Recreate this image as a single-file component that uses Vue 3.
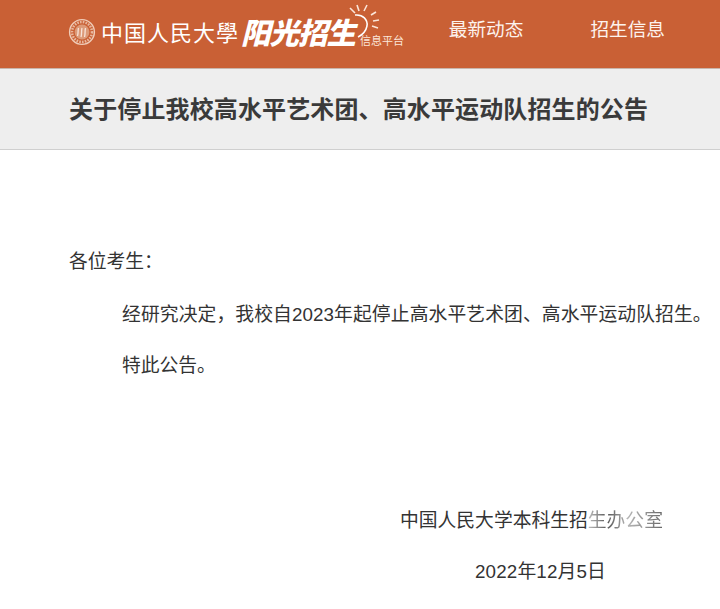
<script setup>
const rays = [
  [3, 4, 8, 9], [10, 1, 12, 7], [20, 1, 17, 7], [29, 8, 24, 11], [32, 16, 26, 17], [31, 24, 25, 22],
]
</script>

<template>
  <div class="page">
    <header class="topbar">
      <div class="logo">
        <svg class="seal" width="28" height="28" viewBox="0 0 28 28">
          <circle cx="14" cy="14" r="12.4" fill="none" stroke="#f0cdb9" stroke-width="1.4" />
          <circle cx="14" cy="14" r="10" fill="none" stroke="#e8b79d" stroke-width="2.6" stroke-dasharray="1.6 1.2" />
          <circle cx="14" cy="14" r="7.4" fill="#dc9a78" />
          <path d="M9.5 18c1-3 .2-5 1-8M13 19c1-3 .2-6 1-9M16.5 19c1-3 .2-6 1-9" fill="none" stroke="#f8e3d8" stroke-width="1.3" />
        </svg>
        <span class="school">中国人民大學</span>
        <div class="sun-brand">
          <span class="brand">阳光招生</span>
          <span class="platform">信息平台</span>
          <svg class="sun" width="34" height="36" viewBox="0 0 34 36">
            <path d="M8 11C16 10 21 16 20 22C19 27 15 31 11 33" fill="none" stroke="#fff" stroke-width="1.5" />
            <line
              v-for="(r, i) in rays"
              :key="i"
              :x1="r[0]" :y1="r[1]" :x2="r[2]" :y2="r[3]"
              stroke="#fbe6da"
              stroke-width="1.6"
            />
          </svg>
        </div>
      </div>
      <nav class="nav">
        <a>最新动态</a>
        <a>招生信息</a>
      </nav>
    </header>

    <div class="title-bar">
      <h1>关于停止我校高水平艺术团、高水平运动队招生的公告</h1>
    </div>

    <main class="content">
      <p class="greeting">各位考生&#xFF1A;</p>
      <p class="para first">经研究决定&#xFF0C;我校自2023年起停止高水平艺术团、高水平运动队招生。</p>
      <p class="para second">特此公告。</p>
      <p class="sign">中国人民大学本科生招<span class="faded">生办公室</span></p>
      <p class="date">2022年12月5日</p>
    </main>
  </div>
</template>

<style>
html, body { margin: 0; background: #fff; overflow: hidden; }
</style>

<style scoped>
.page {
  width: 720px;
  height: 609px;
  overflow: hidden;
  font-family: "Liberation Sans", "Noto Sans CJK SC", sans-serif;
  color: #333;
  background: #fff;
}
.topbar {
  display: flex;
  justify-content: space-between;
  height: 68px;
  padding-left: 68px;
  background: #c96035;
  border-bottom: 1px solid #c9b5ab;
}
.logo {
  display: flex;
  align-items: center;
  height: 64px;
}
.seal { flex: none; }
.school {
  margin: -2px 0 0 5px;
  font-family: "Noto Sans CJK SC", serif;
  font-size: 22px;
  letter-spacing: 1px;
  line-height: 1;
  color: #fff;
  white-space: nowrap;
}
.sun-brand {
  position: relative;
  width: 170px;
  height: 64px;
  margin-left: 2px;
}
.brand {
  position: absolute;
  left: 0;
  top: 14px;
  font-family: "Noto Sans CJK SC", sans-serif;
  font-size: 29.5px;
  font-weight: 900;
  font-style: italic;
  line-height: 34px;
  letter-spacing: -1px;
  color: #fff;
  white-space: nowrap;
}
.platform {
  position: absolute;
  left: 119px;
  top: 34px;
  font-size: 11px;
  line-height: 14px;
  color: #fbe6da;
  white-space: nowrap;
}
.sun {
  position: absolute;
  left: 106px;
  top: 4px;
}
.nav {
  display: flex;
  gap: 67px;
  padding: 17px 55px 0 0;
  font-size: 18.67px;
  line-height: 26px;
  color: #fdf3ee;
}
.title-bar {
  display: flex;
  align-items: center;
  height: 80px;
  padding-left: 69px;
  background: #eee;
  border-bottom: 1px solid #cfcfcf;
}
h1 {
  margin: 2px 0 0;
  font-size: 24px;
  font-weight: 700;
  letter-spacing: 0.13px;
  line-height: 32px;
  color: #3a3a3a;
  white-space: nowrap;
}
.content {
  padding: 99px 0 0 69px;
  font-size: 18.8px;
  line-height: 26px;
  white-space: nowrap;
}
.content p { margin: 0; }
.content .para { margin: 27px 0 0 53px; }
.content .first { letter-spacing: 0.1px; }
.content .second { margin-top: 25px; }
.content .sign { margin: 129px 0 0 331px; }
.content .date { margin: 25px 0 0 406px; letter-spacing: 0.15px; }
.faded {
  background: linear-gradient(90deg, #bbb 0%, #888 14%, #555 25%, #777 35%, #b5b5b5 52%, #999 72%, #666 100%);
  -webkit-background-clip: text;
  background-clip: text;
  color: transparent;
}
</style>
